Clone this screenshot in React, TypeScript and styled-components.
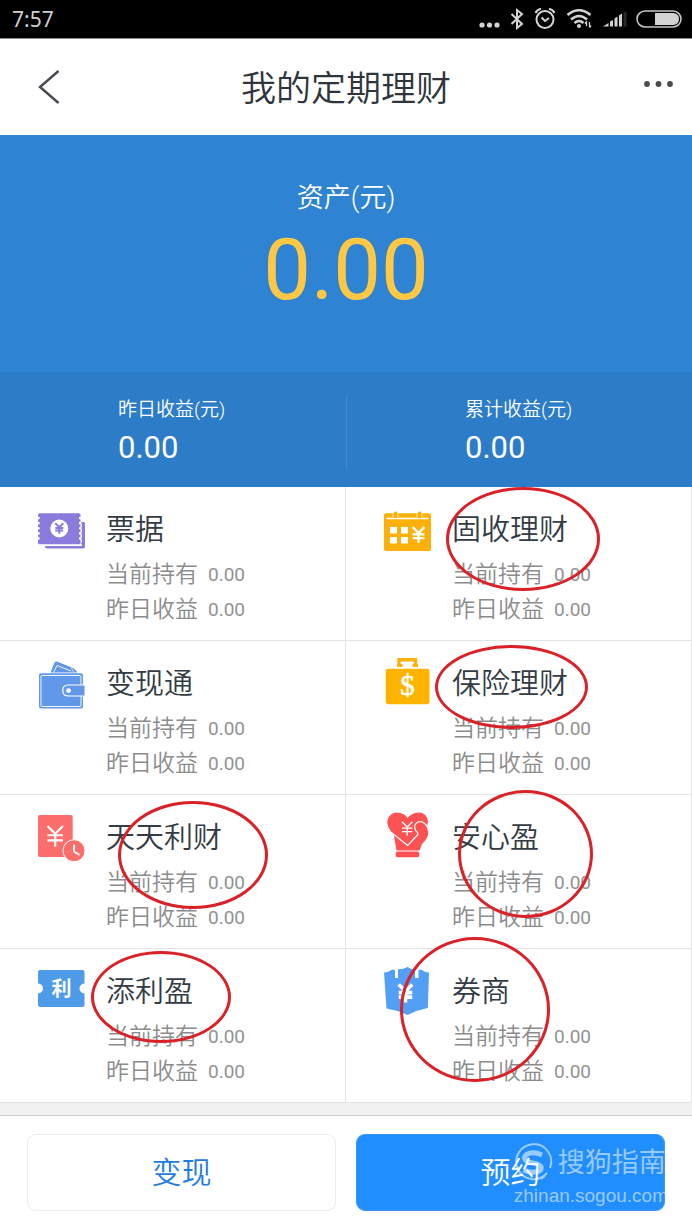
import React from "react";
import styled, { createGlobalStyle } from "styled-components";

const GlobalStyle = createGlobalStyle`
  *, *::before, *::after { box-sizing: border-box; }
  body {
    margin: 0;
    background: #fff;
    color: #333b44;
    font-family: Roboto, "Noto Sans CJK SC", sans-serif;
    font-weight: 350;
  }
  svg { display: block; flex: none; overflow: visible; }
  button { font: inherit; cursor: pointer; }
`;

const Page = styled.div`
  display: flex;
  flex-direction: column;
  min-height: 100vh;
`;

const StatusBar = styled.div`
  display: flex;
  align-items: center;
  justify-content: space-between;
  height: 38px;
  padding: 0 10px 0 12px;
  background: #000;
  color: #cfcfcf;
`;

const Clock = styled.time`
  font-family: "Noto Sans", sans-serif;
  font-size: 21px;
  font-weight: 400;
  line-height: 38px;
`;

const StatusIcons = styled.div`
  display: flex;
  align-items: center;
  gap: 12px;
`;

const Header = styled.header`
  display: grid;
  grid-template-columns: 98px 1fr 98px;
  align-items: center;
  height: 97px;
  border-top: 1px solid #8c8c8c;
`;

const IconButton = styled.button<{ $end?: boolean }>`
  display: flex;
  justify-content: ${(p) => (p.$end ? "flex-end" : "flex-start")};
  padding: ${(p) => (p.$end ? "0 18px 6px 0" : "0 0 0 38px")};
  border: 0;
  background: none;
`;

const Title = styled.h1`
  margin: 0;
  padding-top: 6px;
  font-size: 35px;
  font-weight: 350;
  line-height: 48px;
  text-align: center;
  color: #2f353c;
`;

const Hero = styled.section`
  padding-top: 41px;
  background: #2e83d3;
  color: #fff;
  text-align: center;
`;

const HeroLabel = styled.div`
  font-size: 27px;
  line-height: 44px;
`;

const HeroAmount = styled.div`
  height: 152px;
  font-size: 85px;
  font-weight: 400;
  line-height: 100px;
  color: #ffc844;
`;

const Summary = styled.div`
  display: grid;
  grid-template-columns: 1fr 1fr;
  padding: 24px 0 18px;
  background: #2c7cc8;
  text-align: left;
`;

const SummaryItem = styled.div`
  height: 73px;
  padding-left: 118px;
  & + & { border-left: 1px solid #3f8ad2; }
`;

const SummaryLabel = styled.div`
  font-size: 19px;
  line-height: 28px;
`;

const SummaryValue = styled.div`
  font-size: 31px;
  font-weight: 400;
  line-height: 48px;
`;

const Products = styled.div`
  display: grid;
  grid-template-columns: 1fr 1fr;
`;

const Product = styled.a`
  position: relative;
  display: flex;
  gap: 20px;
  padding: 20px 0 13px 38px;
  border-right: 1px solid #e3e3e3;
  border-bottom: 1px solid #e3e3e3;
  color: inherit;
  text-decoration: none;
`;

const ProductName = styled.h2`
  margin: 3px 0 7px;
  font-size: 29px;
  font-weight: 350;
  line-height: 40px;
`;

const Stat = styled.div`
  display: flex;
  align-items: center;
  gap: 10px;
  font-size: 23px;
  line-height: 35px;
  color: #8c8c8c;
`;

const StatValue = styled.span`
  font-size: 19px;
  font-weight: 400;
  color: #929292;
`;

type Ring = { x: number; y: number; w: number; h: number };

const Mark = styled.span<{ $ring: Ring }>`
  position: absolute;
  z-index: 1;
  left: ${(p) => p.$ring.x}px;
  top: ${(p) => p.$ring.y}px;
  width: ${(p) => p.$ring.w}px;
  height: ${(p) => p.$ring.h}px;
  border: 3px solid #da2128;
  border-radius: 50%;
  pointer-events: none;
`;

const Spacer = styled.div`
  height: 12px;
  background: #f1f1f1;
`;

const Footer = styled.footer`
  position: relative;
  display: flex;
  gap: 20px;
  padding: 18px 27px 19px;
  border-top: 1px solid #c9c9c9;
`;

const Action = styled.button<{ $primary?: boolean }>`
  flex: 1;
  height: 77px;
  padding: 0;
  border: 1px solid ${(p) => (p.$primary ? "#3d97f5" : "#ececec")};
  border-radius: 9px;
  background: ${(p) => (p.$primary ? "#218eff" : "#fff")};
  color: ${(p) => (p.$primary ? "#fff" : "#1f7de0")};
  font-size: 30px;
  line-height: 44px;
`;

const Watermark = styled.div`
  position: absolute;
  right: 24px;
  top: 27px;
  display: flex;
  flex-direction: column;
  color: rgba(255, 255, 255, 0.55);
  font-weight: 400;
  pointer-events: none;
`;

const WatermarkBrand = styled.div`
  display: flex;
  align-items: center;
  gap: 6px;
  font-size: 27px;
  line-height: 40px;
`;

const WatermarkSite = styled.div`
  font-family: "Liberation Sans", sans-serif;
  font-size: 19px;
  line-height: 26px;
`;

/* Yuan sign, centred on x/y; s is half of its height */
function Yuan({ x, y, s, w, color = "#fff" }: { x: number; y: number; s: number; w: number; color?: string }) {
  const a = s * 0.75;
  return (
    <path
      d={`M${x - a} ${y - s}L${x} ${y - s * 0.25}L${x + a} ${y - s}M${x - a} ${y - s * 0.1}H${x + a}M${x - a} ${y + s * 0.4}H${x + a}M${x} ${y - s * 0.2}V${y + s}`}
      fill="none"
      stroke={color}
      strokeWidth={w}
    />
  );
}

const Icon = ({ children }: { children: React.ReactNode }) => (
  <svg width="48" height="50" viewBox="0 0 48 50" aria-hidden="true">{children}</svg>
);

const BillIcon = () => (
  <Icon>
    <path d="M9 15H45.500Q47 15 47 16.500V39.500Q47 41.500 45 41.500H9Q7 41.500 7 39.500Z" fill="#8a7bdc" />
    <path d="M0 4H44V39H0Z" fill="#fff" />
    <path d="M44 15V39" stroke="#8a7bdc" strokeWidth="1.500" strokeDasharray="2.500 2.500" />
    <rect x="0" y="6.300" width="42.500" height="31" rx="1.500" fill="#8a7bdc" />
    <path d="M0.500 11V35M42.200 11V35" stroke="#fff" strokeWidth="2.600" strokeLinecap="round" strokeDasharray="0.100 5" />
    <circle cx="21.300" cy="21.500" r="9" fill="#fff" />
    <Yuan x={21.3} y={21.5} s={5.3} w={2} color="#8a7bdc" />
  </Icon>
);

const CalendarIcon = () => (
  <Icon>
    <rect x="0" y="6.300" width="47" height="37.700" rx="2" fill="#fcb10a" />
    <path d="M2.500 11.500H44.500" stroke="#fff" strokeWidth="1.300" />
    <path d="M11.500 4.700V11M35.500 4.700V11" stroke="#fcb10a" strokeWidth="3.600" />
    <path d="M9 5V10.500M14 5V10.500M33 5V10.500M38 5V10.500" stroke="#fff" strokeWidth="0.700" />
    <path d="M6 20h7v6.500h-7zM17 20h7v6.500h-7zM6 30h7v6.500h-7zM17 30h7v6.500h-7z" fill="#fff" />
    <Yuan x={34.5} y={28} s={7.8} w={2.4} />
  </Icon>
);

const WalletIcon = () => (
  <Icon>
    <path d="M12.500 11.500L16.500 1.500Q17.300 0 19 .6L35 7Q38 8.500 39.500 11.500Z" fill="#6198e7" />
    <path d="M15.500 11.500L19 4.500L33 10" fill="none" stroke="#fff" strokeWidth="0.900" />
    <path d="M33 6.500L36 11.500" fill="none" stroke="#fff" strokeWidth="0.700" />
    <rect x="1" y="12.300" width="44" height="35.200" rx="2" fill="#6198e7" />
    <rect x="3" y="14.500" width="40" height="31" rx="1" fill="none" stroke="#fff" strokeWidth="0.900" />
    <path d="M46.500 24H30.300Q24.700 24 24.700 29.500T30.300 35H46.500" fill="#6198e7" stroke="#fff" strokeWidth="1.200" />
    <circle cx="30.500" cy="29.600" r="2.400" fill="#fff" />
  </Icon>
);

const BriefcaseIcon = () => (
  <Icon>
    <path d="M15 6V-1.200H31.500V6" fill="none" stroke="#fcb10a" strokeWidth="3.400" />
    <path d="M13 4.500H18.500M28.500 4.500H34" stroke="#fcb10a" strokeWidth="3" />
    <rect x="1.700" y="7.700" width="43.800" height="35.500" rx="3" fill="#fdb400" />
    <text x="23.500" y="34" textAnchor="middle" fontFamily="Liberation Serif, serif" fontSize="29" fontWeight="400" fill="#fff" stroke="#fff" strokeWidth="0.600">$</text>
  </Icon>
);

const ReceiptIcon = () => (
  <Icon>
    <rect x="0" y="0" width="34.700" height="42" rx="2" fill="#fb6e6c" />
    <Yuan x={17.2} y={21.3} s={10.3} w={2.2} />
    <circle cx="36" cy="35.700" r="11" fill="#fb6e6c" stroke="#fff" strokeWidth="1" />
    <path d="M36 29.500V36.500L41.500 40" fill="none" stroke="#fff" strokeWidth="1.800" />
  </Icon>
);

const HeartIcon = () => (
  <Icon>
    <path d="M9.500 18L12.500 35.500H35.500L38 29Q44.500 23 44.300 17L41 7L24 14Z" fill="#fd5254" />
    <path d="M23.700 30.500L7.500 17Q1 9 4.500 2.500Q8 -3 14.500 -2.300Q20 -2 23.700 3Q27.500 -2 33 -2.300Q40 -3 43 2.500Q46 9 39.500 17Z" fill="#fd5254" />
    <path d="M8 18L23.700 30.500L33.500 20Q35 18.500 32 16Q29.500 12 31.500 9Q34 5.500 38.500 7Q41.500 8.500 43.500 12" fill="none" stroke="#fff" strokeWidth="1.200" />
    <Yuan x={23.2} y={13.8} s={7} w={1.4} />
    <rect x="11.700" y="36.600" width="23.600" height="5.600" rx="2" fill="#fd5254" />
  </Icon>
);

const VoucherIcon = () => (
  <Icon>
    <path d="M2 1H44.500Q46.500 1 46.500 3V14.500A5 5 0 0 0 46.500 24.500V36Q46.500 38 44.500 38H2Q0 38 0 36V24.500A5 5 0 0 0 0 14.500V3Q0 1 2 1Z" fill="#4d9be9" />
    <text x="23.500" y="27" textAnchor="middle" fontFamily="Noto Sans CJK SC, sans-serif" fontSize="20" fontWeight="700" fill="#fff">利</text>
  </Icon>
);

const BrokerIcon = () => (
  <Icon>
    <path d="M0 3.500Q5 3 8.500 .5L11 1V9H14V.3Q19 .5 23.500 -2Q27 .5 31 .3V9H34.500V1L37 .5Q40 3 45 3.500L43.800 39Q33 41 23.500 46Q13 41 2.500 39.500Z" fill="#549ff6" />
    <Yuan x={21.5} y={24.5} s={9} w={3.6} />
  </Icon>
);

const products: { name: string; icon: React.ReactNode; ring?: Ring }[] = [
  { name: "票据", icon: <BillIcon /> },
  { name: "固收理财", icon: <CalendarIcon />, ring: { x: 100, y: 0, w: 154, h: 104 } },
  { name: "变现通", icon: <WalletIcon /> },
  { name: "保险理财", icon: <BriefcaseIcon />, ring: { x: 89, y: 4, w: 153, h: 84 } },
  { name: "天天利财", icon: <ReceiptIcon />, ring: { x: 118, y: 6, w: 150, h: 108 } },
  { name: "安心盈", icon: <HeartIcon />, ring: { x: 112, y: -5, w: 135, h: 128 } },
  { name: "添利盈", icon: <VoucherIcon />, ring: { x: 91, y: 2, w: 140, h: 92 } },
  { name: "券商", icon: <BrokerIcon />, ring: { x: 54, y: -12, w: 150, h: 145 } },
];

const StatusGlyphs = () => (
  <StatusIcons aria-hidden="true">
    <svg width="19" height="20" fill="#d4d4d4">
      <circle cx="2" cy="16" r="2.600" /><circle cx="9.500" cy="16" r="2.600" /><circle cx="17" cy="16" r="2.600" />
    </svg>
    <svg width="12" height="20" fill="none" stroke="#d4d4d4" strokeWidth="2">
      <path d="M0.500 5L11 15L6 19V1L11 5L0.500 15" />
    </svg>
    <svg width="20" height="20" fill="none" stroke="#d4d4d4" strokeWidth="2">
      <circle cx="10" cy="10.500" r="8.500" /><path d="M6.500 8.500L10 12L14 9M0.500 4Q2 .5 6 -.3M19.500 4Q18 .5 14 -.3" />
    </svg>
    <svg width="24" height="20" fill="none" stroke="#d4d4d4" strokeWidth="2.600">
      <path d="M0.500 6Q12 -3.500 23.500 6M4 10.500Q12 3.500 20 10.500M7.500 14Q12 10 16.500 14" />
      <circle cx="12" cy="17" r="2" fill="#d4d4d4" stroke="none" />
      <path d="M19.500 12V17M22.500 13V18.500M18 14.500L19.500 12.500M24 16.500L22.500 18.500" strokeWidth="1.300" />
    </svg>
    <svg width="21" height="20" fill="#d4d4d4">
      <path d="M0 17.500L5.500 14V17.500zM7 12.500l3-1.500v6.500h-3zM11.500 9.500l3-2v10h-3zM16 6.500l3-2v13h-3z" />
      <path d="M20.500 4l3-2v15.500h-3z" fill="#292929" />
    </svg>
    <svg width="46" height="20">
      <rect x="1" y="2" width="44" height="16" rx="8" fill="none" stroke="#c4c4c4" strokeWidth="1.600" />
      <path d="M19 4H37Q43 4.500 43 10T37 16H19Z" fill="#d2d2d2" />
    </svg>
  </StatusIcons>
);

export default function App() {
  return (
    <Page>
      <GlobalStyle />
      <StatusBar>
        <Clock>7:57</Clock>
        <StatusGlyphs />
      </StatusBar>
      <Header>
        <IconButton aria-label="返回">
          <svg width="22" height="34" fill="none" stroke="#454a50" strokeWidth="2.400">
            <path d="M20.500 1L2 17L20.500 33" />
          </svg>
        </IconButton>
        <Title>我的定期理财</Title>
        <IconButton $end aria-label="更多">
          <svg width="30" height="8" fill="#4a4a4a">
            <circle cx="3" cy="4" r="2.900" /><circle cx="14.500" cy="4" r="2.900" /><circle cx="26" cy="4" r="2.900" />
          </svg>
        </IconButton>
      </Header>
      <main>
        <Hero>
          <HeroLabel>资产(元)</HeroLabel>
          <HeroAmount>0.00</HeroAmount>
          <Summary>
            <SummaryItem>
              <SummaryLabel>昨日收益(元)</SummaryLabel>
              <SummaryValue>0.00</SummaryValue>
            </SummaryItem>
            <SummaryItem>
              <SummaryLabel>累计收益(元)</SummaryLabel>
              <SummaryValue>0.00</SummaryValue>
            </SummaryItem>
          </Summary>
        </Hero>
        <Products>
          {products.map((p) => (
            <Product key={p.name} href="#">
              {p.icon}
              <div>
                <ProductName>{p.name}</ProductName>
                <Stat>当前持有<StatValue>0.00</StatValue></Stat>
                <Stat>昨日收益<StatValue>0.00</StatValue></Stat>
              </div>
              {p.ring && <Mark $ring={p.ring} />}
            </Product>
          ))}
        </Products>
        <Spacer />
      </main>
      <Footer>
        <Action>变现</Action>
        <Action $primary>预约</Action>
        <Watermark>
          <WatermarkBrand>
            <svg width="38" height="38" fill="none" stroke="currentColor">
              <path d="M33 29A17.500 17.500 0 1 1 36 24M31 32L27 35" strokeWidth="2" />
              <path d="M28 11Q19 7 12.500 10.500Q8 15 14 18L23 20Q30 23 25.500 27Q18 30 9.500 26" strokeWidth="5" />
            </svg>
            搜狗指南
          </WatermarkBrand>
          <WatermarkSite>zhinan.sogou.com</WatermarkSite>
        </Watermark>
      </Footer>
    </Page>
  );
}
